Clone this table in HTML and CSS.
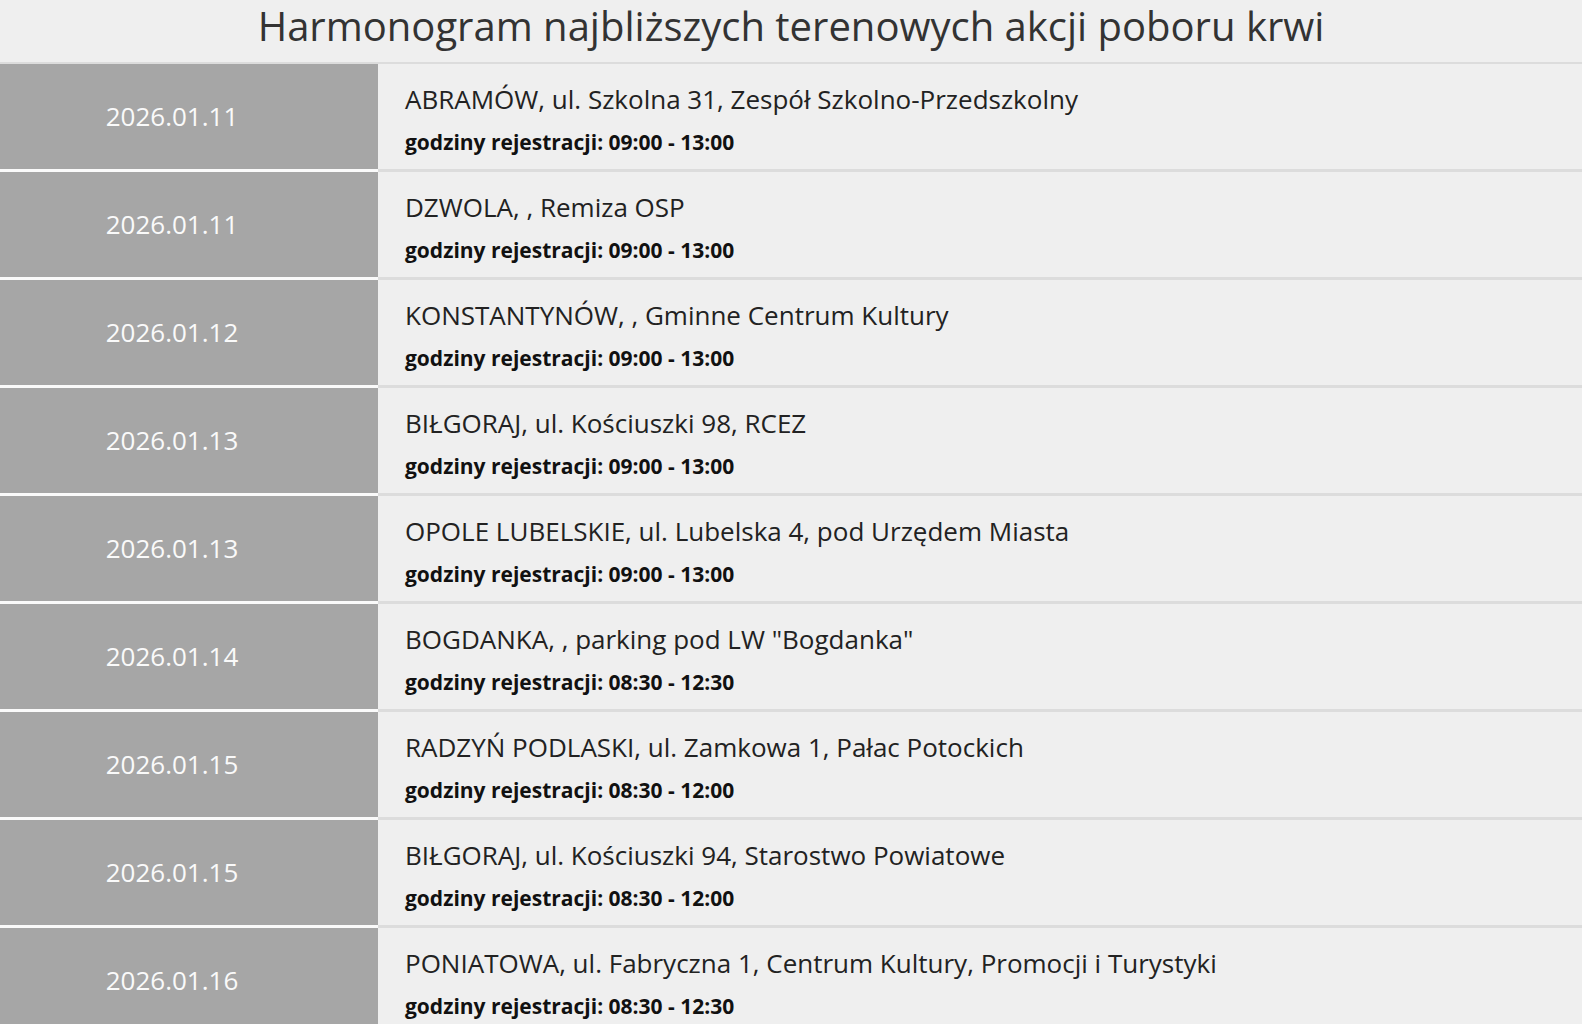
FILE: index.html
```html
<!DOCTYPE html>
<html lang="pl">
<head>
<meta charset="utf-8">
<title>Harmonogram</title>
<link rel="stylesheet" href="styles.css">
</head>
<body>
<h1 class="title">Harmonogram najbliższych terenowych akcji poboru krwi</h1>
<div class="list">
  <div class="row"><div class="date">2026.01.11</div><div class="info"><div class="place">ABRAMÓW, ul. Szkolna 31, Zespół Szkolno-Przedszkolny</div><div class="hours">godziny rejestracji: 09:00 - 13:00</div></div></div>
  <div class="row"><div class="date">2026.01.11</div><div class="info"><div class="place">DZWOLA, , Remiza OSP</div><div class="hours">godziny rejestracji: 09:00 - 13:00</div></div></div>
  <div class="row"><div class="date">2026.01.12</div><div class="info"><div class="place">KONSTANTYNÓW, , Gminne Centrum Kultury</div><div class="hours">godziny rejestracji: 09:00 - 13:00</div></div></div>
  <div class="row"><div class="date">2026.01.13</div><div class="info"><div class="place">BIŁGORAJ, ul. Kościuszki 98, RCEZ</div><div class="hours">godziny rejestracji: 09:00 - 13:00</div></div></div>
  <div class="row"><div class="date">2026.01.13</div><div class="info"><div class="place">OPOLE LUBELSKIE, ul. Lubelska 4, pod Urzędem Miasta</div><div class="hours">godziny rejestracji: 09:00 - 13:00</div></div></div>
  <div class="row"><div class="date">2026.01.14</div><div class="info"><div class="place">BOGDANKA, , parking pod LW "Bogdanka"</div><div class="hours">godziny rejestracji: 08:30 - 12:30</div></div></div>
  <div class="row"><div class="date">2026.01.15</div><div class="info"><div class="place">RADZYŃ PODLASKI, ul. Zamkowa 1, Pałac Potockich</div><div class="hours">godziny rejestracji: 08:30 - 12:00</div></div></div>
  <div class="row"><div class="date">2026.01.15</div><div class="info"><div class="place">BIŁGORAJ, ul. Kościuszki 94, Starostwo Powiatowe</div><div class="hours">godziny rejestracji: 08:30 - 12:00</div></div></div>
  <div class="row"><div class="date">2026.01.16</div><div class="info"><div class="place">PONIATOWA, ul. Fabryczna 1, Centrum Kultury, Promocji i Turystyki</div><div class="hours">godziny rejestracji: 08:30 - 12:30</div></div></div>
</div>
</body>
</html>
```
FILE: styles.css
```css
html, body {
  margin: 0;
  padding: 0;
  background: #efefef;
  font-family: "Open Sans", "Liberation Sans", sans-serif;
  color: #222;
}
.title {
  margin: 0;
  height: 62px;
  line-height: 52px;
  text-align: center;
  font-size: 40px;
  font-weight: 400;
  color: #333;
  border-bottom: 2px solid #dcdcdc;
}
.list {
  display: flex;
  flex-direction: column;
}
.row {
  display: grid;
  grid-template-columns: 378px 1fr;
  height: 108px;
}
.date {
  background: #a6a6a6;
  color: #fafafa;
  font-size: 26px;
  display: flex;
  align-items: center;
  justify-content: center;
  padding: 0 34px 1px 0;
  border-bottom: 3px solid #fafafa;
}
.info {
  border-bottom: 3px solid #dcdcdc;
  padding: 18px 0 0 27px;
}
.place {
  font-size: 26px;
  line-height: 34px;
  color: #222;
}
.hours {
  font-size: 21px;
  font-weight: 700;
  line-height: 28px;
  margin-top: 12px;
  color: #111;
}
```
